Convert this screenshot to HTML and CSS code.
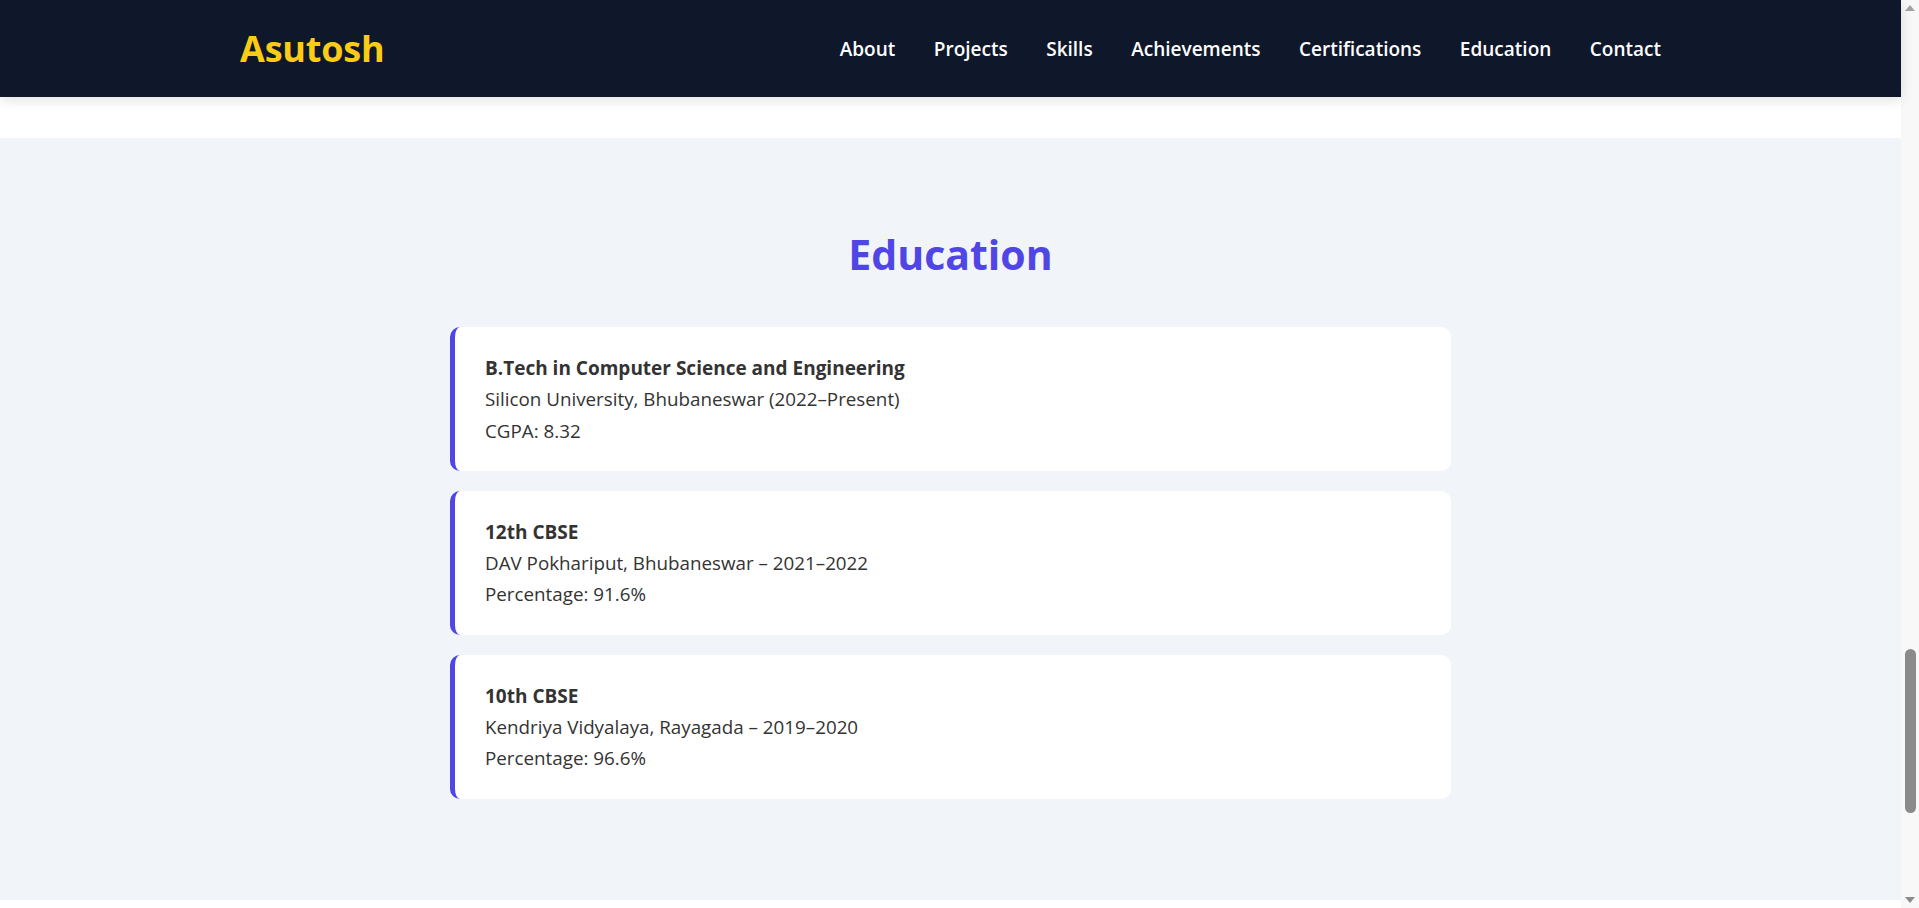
FILE: index.html
```html
<!DOCTYPE html>
<html lang="en">
<head>
<meta charset="utf-8">
<title>Asutosh – Education</title>
<link rel="stylesheet" href="styles.css">
</head>
<body>
<div class="viewport">
  <div class="page">
    <header class="nav">
      <div class="nav-inner">
        <a class="logo" href="#">Asutosh</a>
        <nav class="links">
          <a href="#about">About</a>
          <a href="#projects">Projects</a>
          <a href="#skills">Skills</a>
          <a href="#achievements">Achievements</a>
          <a href="#certifications">Certifications</a>
          <a href="#education">Education</a>
          <a href="#contact">Contact</a>
        </nav>
      </div>
    </header>
    <div class="prev-end"></div>
    <section class="education" id="education">
      <h2 class="section-title">Education</h2>
      <div class="edu-list">
        <div class="edu-card">
          <p class="edu-title">B.Tech in Computer Science and Engineering</p>
          <p class="edu-line">Silicon University, Bhubaneswar (2022–Present)</p>
          <p class="edu-line">CGPA: 8.32</p>
        </div>
        <div class="edu-card">
          <p class="edu-title">12th CBSE</p>
          <p class="edu-line">DAV Pokhariput, Bhubaneswar – 2021–2022</p>
          <p class="edu-line">Percentage: 91.6%</p>
        </div>
        <div class="edu-card">
          <p class="edu-title">10th CBSE</p>
          <p class="edu-line">Kendriya Vidyalaya, Rayagada – 2019–2020</p>
          <p class="edu-line">Percentage: 96.6%</p>
        </div>
      </div>
    </section>
    <div class="next-start"></div>
  </div>
  <div class="scrollbar" aria-hidden="true">
    <span class="arrow arrow-up"></span>
    <div class="track"><div class="thumb"></div></div>
    <span class="arrow arrow-down"></span>
  </div>
</div>
</body>
</html>
```

FILE: styles.css
```css
* { box-sizing: border-box; }

html, body {
  margin: 0;
  padding: 0;
  height: 908px;
  overflow: hidden;
  background: #ffffff;
  font-family: "Open Sans", "Noto Sans", "Liberation Sans", sans-serif;
  color: #333333;
}

.viewport {
  display: flex;
  height: 908px;
}

.page {
  flex: 1;
  display: flex;
  flex-direction: column;
  min-width: 0;
}

/* Navigation */
.nav {
  height: 97px;
  background: #0f172a;
  box-shadow: 0 3px 12px rgba(0, 0, 0, 0.12);
  position: relative;
  z-index: 2;
  flex: none;
}

.nav-inner {
  height: 100%;
  padding: 0 240px;
  display: flex;
  align-items: center;
  justify-content: space-between;
}

.logo {
  color: #facc15;
  font-weight: 700;
  font-size: 36px;
  text-decoration: none;
  letter-spacing: -0.2px;
}

.links {
  display: flex;
  gap: 38.5px;
}

.links a {
  color: #ffffff;
  text-decoration: none;
  font-weight: 600;
  font-size: 19px;
}

.prev-end {
  height: 41px;
  background: #ffffff;
  flex: none;
}

/* Education section */
.education {
  background: #f1f5f9;
  padding: 86px 0 101px;
  flex: none;
}

.section-title {
  margin: 0 0 43px;
  text-align: center;
  color: #4f46e5;
  font-size: 41px;
  line-height: 60px;
  font-weight: 700;
}

.edu-list {
  width: 1001px;
  margin: 0 auto;
  display: flex;
  flex-direction: column;
  gap: 20px;
}

.edu-card {
  background: #ffffff;
  border-left: 5px solid #4f46e5;
  border-radius: 10px;
  padding: 26px 30px 24px 30px;
}

.edu-card p {
  margin: 0;
  font-size: 18.8px;
  line-height: 31.3px;
  color: #333333;
}

.edu-card .edu-title {
  font-weight: 700;
  font-size: 19px;
}

.next-start {
  flex: 1;
  background: #ffffff;
}

/* Scrollbar replica */
.scrollbar {
  width: 18px;
  flex: none;
  background: #f8f8f8;
  display: flex;
  flex-direction: column;
  align-items: center;
}

.track {
  flex: 1;
  width: 100%;
  padding: 633px 3px 0 4px;
}

.thumb {
  height: 164px;
  background: #8b8b8b;
  border-radius: 6px;
}

.arrow {
  width: 0;
  height: 0;
  border-left: 5px solid transparent;
  border-right: 5px solid transparent;
  margin: 5px 0;
  flex: none;
}

.arrow-up {
  border-bottom: 6px solid #a3a3a3;
}

.arrow-down {
  border-top: 6px solid #8b8b8b;
}
```
